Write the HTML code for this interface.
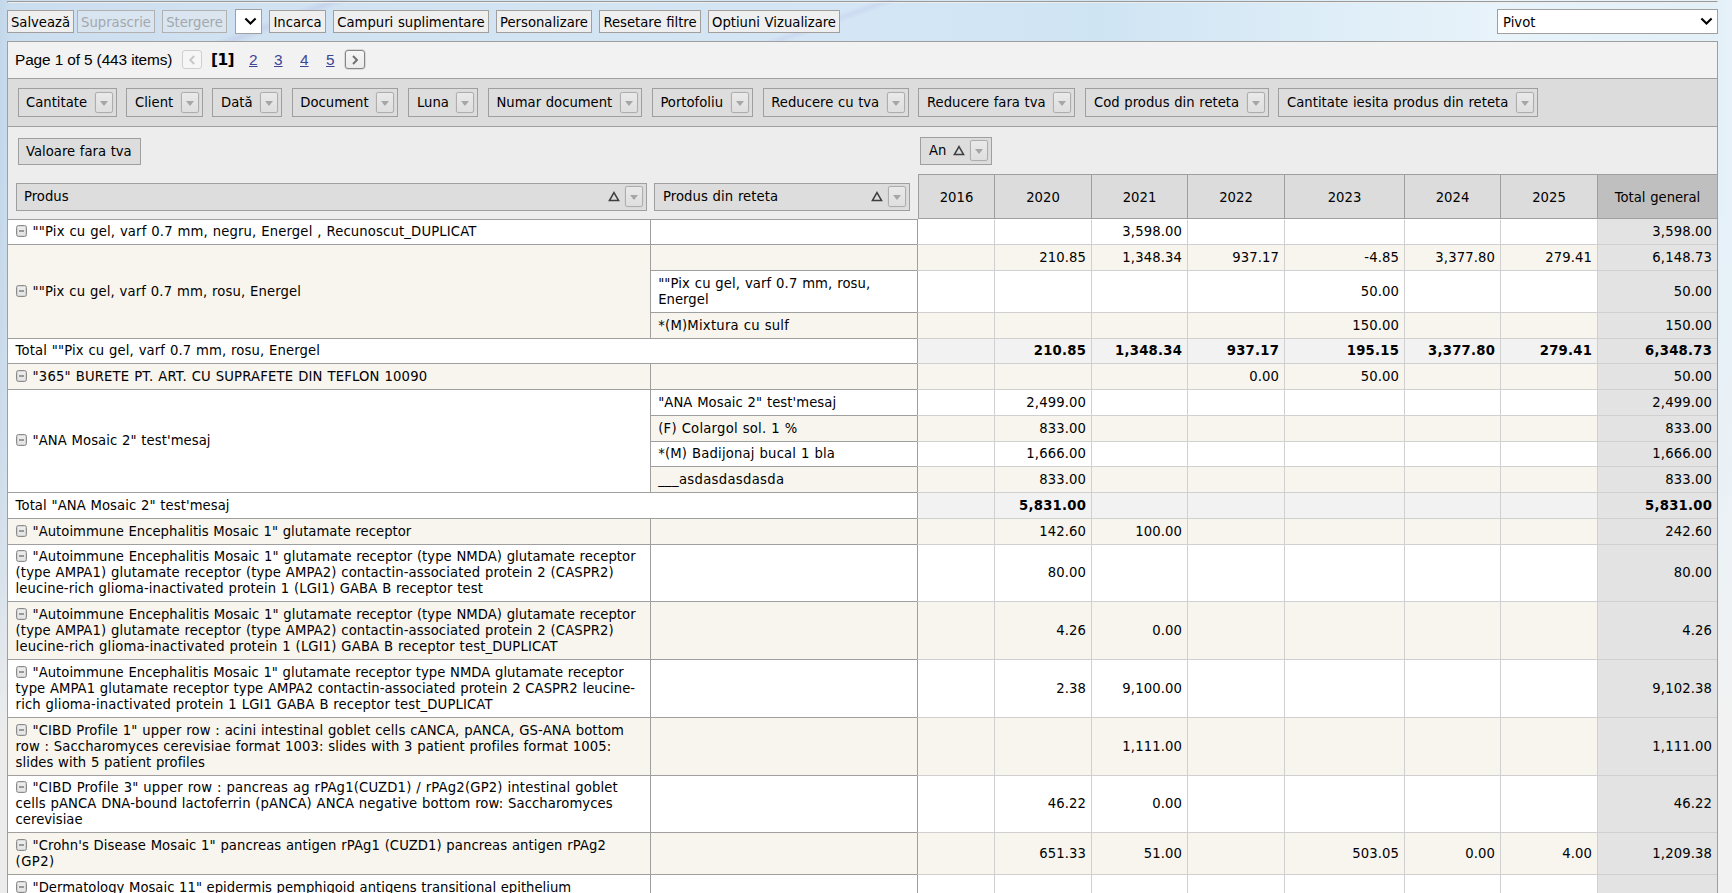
<!DOCTYPE html>
<html lang="ro"><head><meta charset="utf-8"><title>Pivot</title>
<style>
html,body{margin:0;padding:0}
body{width:1732px;height:893px;overflow:hidden;position:relative;font-family:"DejaVu Sans","Liberation Sans",sans-serif;font-size:13.2px;color:#000;word-spacing:0.45px;
background:linear-gradient(90deg,#c3d7ea 0px,#cbdeef 12px,#d0e1f1 200px,#d3e4f3 600px,#d4e6f5 850px,#cfe4f3 1100px,#dcecf7 1300px,#e8f3fa 1500px,#e3f0f8 1700px,#e6f1f9 1732px)}
.a{position:absolute;box-sizing:border-box}
.hr{left:7px;top:1px;width:1711px;height:2px;border-top:1px solid #9a9a9a;border-left:1px solid #9a9a9a;border-bottom:1px solid #eeeeee;border-right:1px solid #eee}
.btn{margin:0;padding:0;font:inherit;color:#000;word-spacing:inherit;appearance:none;-webkit-appearance:none;top:10px;height:23px;border:1px solid #a19e9b;background:#efefef;border-radius:0.5px;line-height:23px;text-align:center;white-space:nowrap}
.btn.dis{background:rgba(239,239,239,.32);color:#a3a8ad;border-color:#b3b1af}
.sel{top:9px;height:25px;border:1px solid #a0a0a0;background:#fff;border-radius:0;line-height:25px;white-space:nowrap}
.grid{left:7px;top:41px;width:1711px;height:860px;border:1px solid #9f9f9f;background:#ededed}
.pager{left:8px;top:42px;width:1709px;height:36px;background:#f2f2f2}
.fa{left:8px;top:78px;width:1709px;height:49px;background:#dcdcdc;border-top:1px solid #9f9f9f;border-bottom:1px solid #9f9f9f}
.fld{border:1px solid #9f9f9f;background:#dddddd;white-space:nowrap}
.fld .t{position:absolute;left:8px;top:0;line-height:27px}
.fb{position:absolute;width:18px;height:21px;box-sizing:border-box;border:1px solid #adadad;border-radius:2.2px;background:linear-gradient(#e9e9e9,#dfdfdf);box-shadow:0 0 0 0.6px #d6d6d6}
.fb:after{content:"";position:absolute;left:3.7px;top:7.5px;border-left:4.3px solid transparent;border-right:4.3px solid transparent;border-top:5.2px solid #a6a6a6}
.ch{top:174px;height:45px;border-top:1px solid #9f9f9f;border-left:1px solid #9f9f9f;border-bottom:1px solid #9f9f9f;background:#dcdcdc;text-align:center;line-height:46px}
.rc{border-top:1px solid #9f9f9f}
.tl{white-space:nowrap;line-height:16px;height:16px}
.dc{border-top:1px solid #d0d0d0;border-left:1px solid #d0d0d0}
.ic{width:11px;height:12px;border:1px solid #8b8b8b;border-radius:2.5px;background:linear-gradient(#ededed,#e3e3e3);box-shadow:inset 0 0 0 0.6px #c4c4c4}
.ic:after{content:"";position:absolute;left:2px;top:4.3px;width:5.4px;height:1.4px;background:#999}
.pg{font-family:"Liberation Sans","DejaVu Sans",sans-serif;font-size:15.4px;word-spacing:0;white-space:nowrap;line-height:20px}
.pb{width:20px;height:19px;border:1px solid #cfcfcf;border-radius:3px;background:#f6f6f6}
</style></head><body>

<div class="a" style="left:0;top:0;width:9px;height:893px;background:linear-gradient(180deg,rgba(236,236,236,0) 0,rgba(236,236,236,0) 120px,rgba(236,236,236,.1) 300px,rgba(236,236,236,.22) 430px,rgba(236,236,236,.36) 510px,rgba(236,236,236,.55) 590px,rgba(236,236,236,.74) 650px,rgba(236,236,236,.9) 700px,#ececec 740px,#ececec 893px)"></div>
<div class="a" style="left:1716px;top:0;width:16px;height:893px;background:linear-gradient(180deg,rgba(242,242,242,0) 0,rgba(242,242,242,0) 200px,rgba(242,242,242,.15) 330px,rgba(242,242,242,.35) 460px,rgba(242,242,242,.6) 580px,rgba(242,242,242,.85) 660px,#f2f2f2 730px,#f2f2f2 893px)"></div>
<div class="a" style="left:0;top:0;width:1732px;height:41px;overflow:hidden"><div class="a" style="left:195px;top:14px;width:180px;height:12px;transform:rotate(-21deg);background:linear-gradient(180deg,rgba(176,184,226,0),rgba(176,184,226,.32) 50%,rgba(176,184,226,0))"></div><div class="a" style="left:745px;top:15px;width:180px;height:10px;transform:rotate(-20deg);background:linear-gradient(180deg,rgba(186,186,230,0),rgba(186,186,230,.28) 50%,rgba(186,186,230,0))"></div></div>
<div class="a hr"></div>
<button type="button" class="a btn" style="left:7px;width:67px">Salvează</button>
<button type="button" class="a btn dis" disabled style="left:77px;width:78px">Suprascrie</button>
<button type="button" class="a btn dis" disabled style="left:162px;width:65px">Stergere</button>
<div class="a sel" style="left:235px;width:27px"><svg class="a" style="right:3.6px;top:7.2px" width="13" height="9" viewBox="0 0 13 9"><path d="M1.4 1.5 L6.5 6.6 L11.6 1.5" fill="none" stroke="#000" stroke-width="2.1"/></svg></div>
<button type="button" class="a btn" style="left:269px;width:57px">Incarca</button>
<button type="button" class="a btn" style="left:333px;width:156px">Campuri suplimentare</button>
<button type="button" class="a btn" style="left:496px;width:96px">Personalizare</button>
<button type="button" class="a btn" style="left:599px;width:102px">Resetare filtre</button>
<button type="button" class="a btn" style="left:708px;width:132px">Optiuni Vizualizare</button>
<div class="a sel" style="left:1497px;width:221px"><span style="padding-left:5px">Pivot</span><svg class="a" style="right:4.5px;top:7.2px" width="13" height="9" viewBox="0 0 13 9"><path d="M1.4 1.5 L6.5 6.6 L11.6 1.5" fill="none" stroke="#000" stroke-width="2.1"/></svg></div>
<div class="a grid"></div><div class="a pager"></div><div class="a fa"></div>
<div class="a pg" style="left:15px;top:50px;letter-spacing:-0.115px">Page 1 of 5 (443 items)</div>
<div class="a pb" style="left:182px;top:50px"><svg class="a" style="left:5px;top:4px" width="8" height="10" viewBox="0 0 8 10"><path d="M6.2 1 L2.2 5 L6.2 9" fill="none" stroke="#c6c6c6" stroke-width="1.9"/></svg></div>
<div class="a pg" style="left:211px;top:50px;font-weight:bold;font-family:'DejaVu Sans',sans-serif;font-size:15.4px;letter-spacing:-0.6px">[1]</div>
<a class="a pg" style="left:249px;top:50px;color:#3c4596;text-decoration:underline">2</a>
<a class="a pg" style="left:274px;top:50px;color:#3c4596;text-decoration:underline">3</a>
<a class="a pg" style="left:300px;top:50px;color:#3c4596;text-decoration:underline">4</a>
<a class="a pg" style="left:326px;top:50px;color:#3c4596;text-decoration:underline">5</a>
<div class="a pb" style="left:345px;top:50px;border-color:#858585;background:linear-gradient(#f6f6f6,#ececec);box-shadow:0 0 0 0.5px #bdbdbd"><svg class="a" style="left:5px;top:4px" width="8" height="10" viewBox="0 0 8 10"><path d="M2 1 L6 5 L2 9" fill="none" stroke="#6f6f6f" stroke-width="1.9"/></svg></div>
<div class="a fld" style="left:18px;top:88px;width:99px;height:29px"><span class="t" style="left:7.00px;line-height:27px"><span>Cantitate</span></span><span class="fb" style="right:3px;top:3px"></span></div>
<div class="a fld" style="left:126px;top:88px;width:77px;height:29px"><span class="t" style="left:8.00px;line-height:27px"><span>Client</span></span><span class="fb" style="right:3px;top:3px"></span></div>
<div class="a fld" style="left:212px;top:88px;width:70px;height:29px"><span class="t" style="left:8.00px;line-height:27px"><span>Dată</span></span><span class="fb" style="right:3px;top:3px"></span></div>
<div class="a fld" style="left:292px;top:88px;width:106px;height:29px"><span class="t" style="left:7.30px;line-height:27px"><span>Document</span></span><span class="fb" style="right:3px;top:3px"></span></div>
<div class="a fld" style="left:408px;top:88px;width:70px;height:29px"><span class="t" style="left:8.00px;line-height:27px"><span>Luna</span></span><span class="fb" style="right:3px;top:3px"></span></div>
<div class="a fld" style="left:488px;top:88px;width:154px;height:29px"><span class="t" style="left:7.50px;line-height:27px"><span>Numar document</span></span><span class="fb" style="right:3px;top:3px"></span></div>
<div class="a fld" style="left:652px;top:88px;width:101px;height:29px"><span class="t" style="left:7.40px;line-height:27px"><span>Portofoliu</span></span><span class="fb" style="right:3px;top:3px"></span></div>
<div class="a fld" style="left:763px;top:88px;width:146px;height:29px"><span class="t" style="left:7.30px;line-height:27px"><span style="letter-spacing:-0.005px">Reducere cu tva</span></span><span class="fb" style="right:3px;top:3px"></span></div>
<div class="a fld" style="left:918px;top:88px;width:157px;height:29px"><span class="t" style="left:8.00px;line-height:27px"><span>Reducere fara tva</span></span><span class="fb" style="right:3px;top:3px"></span></div>
<div class="a fld" style="left:1085px;top:88px;width:184px;height:29px"><span class="t" style="left:8.00px;line-height:27px"><span style="letter-spacing:0.008px">Cod produs din reteta</span></span><span class="fb" style="right:3px;top:3px"></span></div>
<div class="a fld" style="left:1278px;top:88px;width:260px;height:29px"><span class="t" style="left:8.00px;line-height:27px"><span style="letter-spacing:0.025px">Cantitate iesita produs din reteta</span></span><span class="fb" style="right:3px;top:3px"></span></div>
<div class="a fld" style="left:18px;top:138px;width:123px;height:27px"><span class="t" style="left:7.00px;line-height:25px"><span>Valoare fara tva</span></span></div>
<div class="a fld" style="left:920px;top:137px;width:72px;height:28px"><span class="t" style="left:8.00px;line-height:26px"><span>An</span></span><span class="fb" style="right:3px;top:2px"></span><svg style="position:absolute;right:26px;top:7px" width="12" height="11" viewBox="0 0 12 11"><path d="M6 1.6 L10.6 9.6 L1.4 9.6 Z" fill="none" stroke="#3f3f3f" stroke-width="1.5"/></svg></div>
<div class="a fld" style="left:16px;top:183px;width:631px;height:28px"><span class="t" style="left:7.00px;line-height:26px"><span>Produs</span></span><span class="fb" style="right:3px;top:2px"></span><svg style="position:absolute;right:26px;top:7px" width="12" height="11" viewBox="0 0 12 11"><path d="M6 1.6 L10.6 9.6 L1.4 9.6 Z" fill="none" stroke="#3f3f3f" stroke-width="1.5"/></svg></div>
<div class="a fld" style="left:654px;top:183px;width:256px;height:28px"><span class="t" style="left:8.00px;line-height:26px"><span style="letter-spacing:0.066px">Produs din reteta</span></span><span class="fb" style="right:3px;top:2px"></span><svg style="position:absolute;right:26px;top:7px" width="12" height="11" viewBox="0 0 12 11"><path d="M6 1.6 L10.6 9.6 L1.4 9.6 Z" fill="none" stroke="#3f3f3f" stroke-width="1.5"/></svg></div>
<div class="a ch" style="left:918px;width:76px;line-height:46.5px">2016</div>
<div class="a ch" style="left:994px;width:97px;line-height:46.5px">2020</div>
<div class="a ch" style="left:1091px;width:96px;line-height:46.5px">2021</div>
<div class="a ch" style="left:1187px;width:97px;line-height:46.5px">2022</div>
<div class="a ch" style="left:1284px;width:120px;line-height:46.5px">2023</div>
<div class="a ch" style="left:1404px;width:96px;line-height:46.5px">2024</div>
<div class="a ch" style="left:1500px;width:97px;line-height:46.5px">2025</div>
<div class="a ch" style="left:1597px;width:120px;line-height:46.5px;background:#bfbfbf">Total general</div>
<div class="a rc" style="left:8px;top:219px;width:642px;height:25px;background:#ffffff"></div>
<div class="a ic" style="left:16px;top:225px"></div>
<div class="a tl" style="left:32.6px;top:224px"><span style="letter-spacing:0.156px">&quot;&quot;Pix cu gel, varf 0.7 mm, negru, Energel , Recunoscut_DUPLICAT</span></div>
<div class="a rc" style="left:8px;top:244px;width:642px;height:94px;background:#f8f5ef"></div>
<div class="a ic" style="left:16px;top:285px"></div>
<div class="a tl" style="left:32.6px;top:284px"><span style="letter-spacing:0.131px">&quot;&quot;Pix cu gel, varf 0.7 mm, rosu, Energel</span></div>
<div class="a rc" style="left:8px;top:338px;width:909px;height:25px;background:#ffffff"></div>
<div class="a tl" style="left:15.6px;top:343px"><span style="letter-spacing:0.126px">Total &quot;&quot;Pix cu gel, varf 0.7 mm, rosu, Energel</span></div>
<div class="a rc" style="left:8px;top:363px;width:642px;height:26px;background:#f8f5ef"></div>
<div class="a ic" style="left:16px;top:370px"></div>
<div class="a tl" style="left:32.6px;top:369px"><span style="letter-spacing:0.185px">&quot;365&quot; BURETE PT. ART. CU SUPRAFETE DIN TEFLON 10090</span></div>
<div class="a rc" style="left:8px;top:389px;width:642px;height:103px;background:#ffffff"></div>
<div class="a ic" style="left:16px;top:434px"></div>
<div class="a tl" style="left:32.6px;top:433px"><span style="letter-spacing:0.072px">&quot;ANA Mosaic 2&quot; test&#x27;mesaj</span></div>
<div class="a rc" style="left:8px;top:492px;width:909px;height:26px;background:#ffffff"></div>
<div class="a tl" style="left:15.6px;top:498px"><span style="letter-spacing:0.076px">Total &quot;ANA Mosaic 2&quot; test&#x27;mesaj</span></div>
<div class="a rc" style="left:8px;top:518px;width:642px;height:26px;background:#f8f5ef"></div>
<div class="a ic" style="left:16px;top:525px"></div>
<div class="a tl" style="left:32.6px;top:524px"><span style="letter-spacing:0.028px">&quot;Autoimmune Encephalitis Mosaic 1&quot; glutamate receptor</span></div>
<div class="a rc" style="left:8px;top:544px;width:642px;height:57px;background:#ffffff"></div>
<div class="a ic" style="left:16px;top:550px"></div>
<div class="a tl" style="left:32.6px;top:549px"><span style="letter-spacing:0.045px">&quot;Autoimmune Encephalitis Mosaic 1&quot; glutamate receptor (type NMDA) glutamate receptor</span></div>
<div class="a tl" style="left:15.6px;top:565px"><span style="letter-spacing:0.111px">(type AMPA1) glutamate receptor (type AMPA2) contactin-associated protein 2 (CASPR2)</span></div>
<div class="a tl" style="left:15.6px;top:581px"><span style="letter-spacing:0.108px">leucine-rich glioma-inactivated protein 1 (LGI1) GABA B receptor test</span></div>
<div class="a rc" style="left:8px;top:601px;width:642px;height:58px;background:#f8f5ef"></div>
<div class="a ic" style="left:16px;top:608px"></div>
<div class="a tl" style="left:32.6px;top:607px"><span style="letter-spacing:0.045px">&quot;Autoimmune Encephalitis Mosaic 1&quot; glutamate receptor (type NMDA) glutamate receptor</span></div>
<div class="a tl" style="left:15.6px;top:623px"><span style="letter-spacing:0.111px">(type AMPA1) glutamate receptor (type AMPA2) contactin-associated protein 2 (CASPR2)</span></div>
<div class="a tl" style="left:15.6px;top:639px"><span style="letter-spacing:0.143px">leucine-rich glioma-inactivated protein 1 (LGI1) GABA B receptor test_DUPLICAT</span></div>
<div class="a rc" style="left:8px;top:659px;width:642px;height:58px;background:#ffffff"></div>
<div class="a ic" style="left:16px;top:666px"></div>
<div class="a tl" style="left:32.6px;top:665px"><span style="letter-spacing:0.025px">&quot;Autoimmune Encephalitis Mosaic 1&quot; glutamate receptor type NMDA glutamate receptor</span></div>
<div class="a tl" style="left:15.6px;top:681px"><span style="letter-spacing:0.052px">type AMPA1 glutamate receptor type AMPA2 contactin-associated protein 2 CASPR2 leucine-</span></div>
<div class="a tl" style="left:15.6px;top:697px"><span style="letter-spacing:0.128px">rich glioma-inactivated protein 1 LGI1 GABA B receptor test_DUPLICAT</span></div>
<div class="a rc" style="left:8px;top:717px;width:642px;height:58px;background:#f8f5ef"></div>
<div class="a ic" style="left:16px;top:724px"></div>
<div class="a tl" style="left:32.6px;top:723px"><span style="letter-spacing:0.115px">&quot;CIBD Profile 1&quot; upper row : acini intestinal goblet cells cANCA, pANCA, GS-ANA bottom</span></div>
<div class="a tl" style="left:15.6px;top:739px"><span style="letter-spacing:0.091px">row : Saccharomyces cerevisiae format 1003: slides with 3 patient profiles format 1005:</span></div>
<div class="a tl" style="left:15.6px;top:755px"><span style="letter-spacing:0.043px">slides with 5 patient profiles</span></div>
<div class="a rc" style="left:8px;top:775px;width:642px;height:57px;background:#ffffff"></div>
<div class="a ic" style="left:16px;top:781px"></div>
<div class="a tl" style="left:32.6px;top:780px"><span style="letter-spacing:0.176px">&quot;CIBD Profile 3&quot; upper row : pancreas ag rPAg1(CUZD1) / rPAg2(GP2) intestinal goblet</span></div>
<div class="a tl" style="left:15.6px;top:796px"><span style="letter-spacing:0.102px">cells pANCA DNA-bound lactoferrin (pANCA) ANCA negative bottom row: Saccharomyces</span></div>
<div class="a tl" style="left:15.6px;top:812px"><span style="letter-spacing:0.019px">cerevisiae</span></div>
<div class="a rc" style="left:8px;top:832px;width:642px;height:42px;background:#f8f5ef"></div>
<div class="a ic" style="left:16px;top:839px"></div>
<div class="a tl" style="left:32.6px;top:838px"><span style="letter-spacing:0.071px">&quot;Crohn&#x27;s Disease Mosaic 1&quot; pancreas antigen rPAg1 (CUZD1) pancreas antigen rPAg2</span></div>
<div class="a tl" style="left:15.6px;top:854px"><span style="letter-spacing:0.429px">(GP2)</span></div>
<div class="a rc" style="left:8px;top:874px;width:642px;height:42px;background:#ffffff"></div>
<div class="a ic" style="left:16px;top:881px"></div>
<div class="a tl" style="left:32.6px;top:880px"><span style="letter-spacing:0.014px">&quot;Dermatology Mosaic 11&quot; epidermis pemphigoid antigens transitional epithelium</span></div>
<div class="a rc" style="left:650px;top:219px;width:267px;height:25px;background:#ffffff;border-left:1px solid #9f9f9f"></div>
<div class="a rc" style="left:650px;top:244px;width:267px;height:26px;background:#f8f5ef;border-left:1px solid #9f9f9f"></div>
<div class="a rc" style="left:650px;top:270px;width:267px;height:42px;background:#ffffff;border-left:1px solid #9f9f9f"></div>
<div class="a tl" style="left:658.2px;top:276px"><span style="letter-spacing:0.114px">&quot;&quot;Pix cu gel, varf 0.7 mm, rosu,</span></div>
<div class="a tl" style="left:658.2px;top:292px"><span style="letter-spacing:0.037px">Energel</span></div>
<div class="a rc" style="left:650px;top:312px;width:267px;height:26px;background:#f8f5ef;border-left:1px solid #9f9f9f"></div>
<div class="a tl" style="left:658.2px;top:318px"><span style="letter-spacing:0.228px">*(M)Mixtura cu sulf</span></div>
<div class="a rc" style="left:650px;top:363px;width:267px;height:26px;background:#f8f5ef;border-left:1px solid #9f9f9f"></div>
<div class="a rc" style="left:650px;top:389px;width:267px;height:26px;background:#ffffff;border-left:1px solid #9f9f9f"></div>
<div class="a tl" style="left:658.2px;top:395px"><span style="letter-spacing:0.072px">&quot;ANA Mosaic 2&quot; test&#x27;mesaj</span></div>
<div class="a rc" style="left:650px;top:415px;width:267px;height:26px;background:#f8f5ef;border-left:1px solid #9f9f9f"></div>
<div class="a tl" style="left:658.2px;top:421px"><span style="letter-spacing:0.235px">(F) Colargol sol. 1 %</span></div>
<div class="a rc" style="left:650px;top:441px;width:267px;height:25px;background:#ffffff;border-left:1px solid #9f9f9f"></div>
<div class="a tl" style="left:658.2px;top:446px"><span style="letter-spacing:0.187px">*(M) Badijonaj bucal 1 bla</span></div>
<div class="a rc" style="left:650px;top:466px;width:267px;height:26px;background:#f8f5ef;border-left:1px solid #9f9f9f"></div>
<div class="a tl" style="left:658.2px;top:472px"><span style="letter-spacing:0.313px">___asdasdasdasda</span></div>
<div class="a rc" style="left:650px;top:518px;width:267px;height:26px;background:#f8f5ef;border-left:1px solid #9f9f9f"></div>
<div class="a rc" style="left:650px;top:544px;width:267px;height:57px;background:#ffffff;border-left:1px solid #9f9f9f"></div>
<div class="a rc" style="left:650px;top:601px;width:267px;height:58px;background:#f8f5ef;border-left:1px solid #9f9f9f"></div>
<div class="a rc" style="left:650px;top:659px;width:267px;height:58px;background:#ffffff;border-left:1px solid #9f9f9f"></div>
<div class="a rc" style="left:650px;top:717px;width:267px;height:58px;background:#f8f5ef;border-left:1px solid #9f9f9f"></div>
<div class="a rc" style="left:650px;top:775px;width:267px;height:57px;background:#ffffff;border-left:1px solid #9f9f9f"></div>
<div class="a rc" style="left:650px;top:832px;width:267px;height:42px;background:#f8f5ef;border-left:1px solid #9f9f9f"></div>
<div class="a rc" style="left:650px;top:874px;width:267px;height:42px;background:#ffffff;border-left:1px solid #9f9f9f"></div>
<div class="a dc" style="left:917px;top:219px;width:77px;height:25px;background:#ffffff;border-left-color:#9f9f9f;border-top-color:#ffffff"></div>
<div class="a dc" style="left:994px;top:219px;width:97px;height:25px;background:#ffffff;border-top-color:#ffffff"></div>
<div class="a dc" style="left:1091px;top:219px;width:96px;height:25px;background:#ffffff;border-top-color:#ffffff"></div>
<div class="a tl" style="left:1091px;top:224px;width:91.14px;text-align:right;letter-spacing:0.14px"><span>3,598.00</span></div>
<div class="a dc" style="left:1187px;top:219px;width:97px;height:25px;background:#ffffff;border-top-color:#ffffff"></div>
<div class="a dc" style="left:1284px;top:219px;width:120px;height:25px;background:#ffffff;border-top-color:#ffffff"></div>
<div class="a dc" style="left:1404px;top:219px;width:96px;height:25px;background:#ffffff;border-top-color:#ffffff"></div>
<div class="a dc" style="left:1500px;top:219px;width:97px;height:25px;background:#ffffff;border-top-color:#ffffff"></div>
<div class="a dc" style="left:1597px;top:219px;width:120px;height:25px;background:#e3e3e3;border-top-color:#e3e3e3"></div>
<div class="a tl" style="left:1597px;top:224px;width:115.14px;text-align:right;letter-spacing:0.14px"><span>3,598.00</span></div>
<div class="a dc" style="left:917px;top:244px;width:77px;height:26px;background:#f8f5ef;border-left-color:#9f9f9f"></div>
<div class="a dc" style="left:994px;top:244px;width:97px;height:26px;background:#f8f5ef"></div>
<div class="a tl" style="left:994px;top:250px;width:92.14px;text-align:right;letter-spacing:0.14px"><span>210.85</span></div>
<div class="a dc" style="left:1091px;top:244px;width:96px;height:26px;background:#f8f5ef"></div>
<div class="a tl" style="left:1091px;top:250px;width:91.14px;text-align:right;letter-spacing:0.14px"><span>1,348.34</span></div>
<div class="a dc" style="left:1187px;top:244px;width:97px;height:26px;background:#f8f5ef"></div>
<div class="a tl" style="left:1187px;top:250px;width:92.14px;text-align:right;letter-spacing:0.14px"><span>937.17</span></div>
<div class="a dc" style="left:1284px;top:244px;width:120px;height:26px;background:#f8f5ef"></div>
<div class="a tl" style="left:1284px;top:250px;width:115.14px;text-align:right;letter-spacing:0.14px"><span>-4.85</span></div>
<div class="a dc" style="left:1404px;top:244px;width:96px;height:26px;background:#f8f5ef"></div>
<div class="a tl" style="left:1404px;top:250px;width:91.14px;text-align:right;letter-spacing:0.14px"><span>3,377.80</span></div>
<div class="a dc" style="left:1500px;top:244px;width:97px;height:26px;background:#f8f5ef"></div>
<div class="a tl" style="left:1500px;top:250px;width:92.14px;text-align:right;letter-spacing:0.14px"><span>279.41</span></div>
<div class="a dc" style="left:1597px;top:244px;width:120px;height:26px;background:#e3e3e3"></div>
<div class="a tl" style="left:1597px;top:250px;width:115.14px;text-align:right;letter-spacing:0.14px"><span>6,148.73</span></div>
<div class="a dc" style="left:917px;top:270px;width:77px;height:42px;background:#ffffff;border-left-color:#9f9f9f"></div>
<div class="a dc" style="left:994px;top:270px;width:97px;height:42px;background:#ffffff"></div>
<div class="a dc" style="left:1091px;top:270px;width:96px;height:42px;background:#ffffff"></div>
<div class="a dc" style="left:1187px;top:270px;width:97px;height:42px;background:#ffffff"></div>
<div class="a dc" style="left:1284px;top:270px;width:120px;height:42px;background:#ffffff"></div>
<div class="a tl" style="left:1284px;top:284px;width:115.14px;text-align:right;letter-spacing:0.14px"><span>50.00</span></div>
<div class="a dc" style="left:1404px;top:270px;width:96px;height:42px;background:#ffffff"></div>
<div class="a dc" style="left:1500px;top:270px;width:97px;height:42px;background:#ffffff"></div>
<div class="a dc" style="left:1597px;top:270px;width:120px;height:42px;background:#e3e3e3"></div>
<div class="a tl" style="left:1597px;top:284px;width:115.14px;text-align:right;letter-spacing:0.14px"><span>50.00</span></div>
<div class="a dc" style="left:917px;top:312px;width:77px;height:26px;background:#f8f5ef;border-left-color:#9f9f9f"></div>
<div class="a dc" style="left:994px;top:312px;width:97px;height:26px;background:#f8f5ef"></div>
<div class="a dc" style="left:1091px;top:312px;width:96px;height:26px;background:#f8f5ef"></div>
<div class="a dc" style="left:1187px;top:312px;width:97px;height:26px;background:#f8f5ef"></div>
<div class="a dc" style="left:1284px;top:312px;width:120px;height:26px;background:#f8f5ef"></div>
<div class="a tl" style="left:1284px;top:318px;width:115.14px;text-align:right;letter-spacing:0.14px"><span>150.00</span></div>
<div class="a dc" style="left:1404px;top:312px;width:96px;height:26px;background:#f8f5ef"></div>
<div class="a dc" style="left:1500px;top:312px;width:97px;height:26px;background:#f8f5ef"></div>
<div class="a dc" style="left:1597px;top:312px;width:120px;height:26px;background:#e3e3e3"></div>
<div class="a tl" style="left:1597px;top:318px;width:115.14px;text-align:right;letter-spacing:0.14px"><span>150.00</span></div>
<div class="a dc" style="left:917px;top:338px;width:77px;height:25px;background:#f2f2f2;border-left-color:#9f9f9f"></div>
<div class="a dc" style="left:994px;top:338px;width:97px;height:25px;background:#f2f2f2"></div>
<div class="a tl" style="left:994px;top:343px;width:92.28px;text-align:right;font-weight:bold;letter-spacing:0.28px"><span>210.85</span></div>
<div class="a dc" style="left:1091px;top:338px;width:96px;height:25px;background:#f2f2f2"></div>
<div class="a tl" style="left:1091px;top:343px;width:91.28px;text-align:right;font-weight:bold;letter-spacing:0.28px"><span>1,348.34</span></div>
<div class="a dc" style="left:1187px;top:338px;width:97px;height:25px;background:#f2f2f2"></div>
<div class="a tl" style="left:1187px;top:343px;width:92.28px;text-align:right;font-weight:bold;letter-spacing:0.28px"><span>937.17</span></div>
<div class="a dc" style="left:1284px;top:338px;width:120px;height:25px;background:#f2f2f2"></div>
<div class="a tl" style="left:1284px;top:343px;width:115.28px;text-align:right;font-weight:bold;letter-spacing:0.28px"><span>195.15</span></div>
<div class="a dc" style="left:1404px;top:338px;width:96px;height:25px;background:#f2f2f2"></div>
<div class="a tl" style="left:1404px;top:343px;width:91.28px;text-align:right;font-weight:bold;letter-spacing:0.28px"><span>3,377.80</span></div>
<div class="a dc" style="left:1500px;top:338px;width:97px;height:25px;background:#f2f2f2"></div>
<div class="a tl" style="left:1500px;top:343px;width:92.28px;text-align:right;font-weight:bold;letter-spacing:0.28px"><span>279.41</span></div>
<div class="a dc" style="left:1597px;top:338px;width:120px;height:25px;background:#e3e3e3"></div>
<div class="a tl" style="left:1597px;top:343px;width:115.28px;text-align:right;font-weight:bold;letter-spacing:0.28px"><span>6,348.73</span></div>
<div class="a dc" style="left:917px;top:363px;width:77px;height:26px;background:#f8f5ef;border-left-color:#9f9f9f"></div>
<div class="a dc" style="left:994px;top:363px;width:97px;height:26px;background:#f8f5ef"></div>
<div class="a dc" style="left:1091px;top:363px;width:96px;height:26px;background:#f8f5ef"></div>
<div class="a dc" style="left:1187px;top:363px;width:97px;height:26px;background:#f8f5ef"></div>
<div class="a tl" style="left:1187px;top:369px;width:92.14px;text-align:right;letter-spacing:0.14px"><span>0.00</span></div>
<div class="a dc" style="left:1284px;top:363px;width:120px;height:26px;background:#f8f5ef"></div>
<div class="a tl" style="left:1284px;top:369px;width:115.14px;text-align:right;letter-spacing:0.14px"><span>50.00</span></div>
<div class="a dc" style="left:1404px;top:363px;width:96px;height:26px;background:#f8f5ef"></div>
<div class="a dc" style="left:1500px;top:363px;width:97px;height:26px;background:#f8f5ef"></div>
<div class="a dc" style="left:1597px;top:363px;width:120px;height:26px;background:#e3e3e3"></div>
<div class="a tl" style="left:1597px;top:369px;width:115.14px;text-align:right;letter-spacing:0.14px"><span>50.00</span></div>
<div class="a dc" style="left:917px;top:389px;width:77px;height:26px;background:#ffffff;border-left-color:#9f9f9f"></div>
<div class="a dc" style="left:994px;top:389px;width:97px;height:26px;background:#ffffff"></div>
<div class="a tl" style="left:994px;top:395px;width:92.14px;text-align:right;letter-spacing:0.14px"><span>2,499.00</span></div>
<div class="a dc" style="left:1091px;top:389px;width:96px;height:26px;background:#ffffff"></div>
<div class="a dc" style="left:1187px;top:389px;width:97px;height:26px;background:#ffffff"></div>
<div class="a dc" style="left:1284px;top:389px;width:120px;height:26px;background:#ffffff"></div>
<div class="a dc" style="left:1404px;top:389px;width:96px;height:26px;background:#ffffff"></div>
<div class="a dc" style="left:1500px;top:389px;width:97px;height:26px;background:#ffffff"></div>
<div class="a dc" style="left:1597px;top:389px;width:120px;height:26px;background:#e3e3e3"></div>
<div class="a tl" style="left:1597px;top:395px;width:115.14px;text-align:right;letter-spacing:0.14px"><span>2,499.00</span></div>
<div class="a dc" style="left:917px;top:415px;width:77px;height:26px;background:#f8f5ef;border-left-color:#9f9f9f"></div>
<div class="a dc" style="left:994px;top:415px;width:97px;height:26px;background:#f8f5ef"></div>
<div class="a tl" style="left:994px;top:421px;width:92.14px;text-align:right;letter-spacing:0.14px"><span>833.00</span></div>
<div class="a dc" style="left:1091px;top:415px;width:96px;height:26px;background:#f8f5ef"></div>
<div class="a dc" style="left:1187px;top:415px;width:97px;height:26px;background:#f8f5ef"></div>
<div class="a dc" style="left:1284px;top:415px;width:120px;height:26px;background:#f8f5ef"></div>
<div class="a dc" style="left:1404px;top:415px;width:96px;height:26px;background:#f8f5ef"></div>
<div class="a dc" style="left:1500px;top:415px;width:97px;height:26px;background:#f8f5ef"></div>
<div class="a dc" style="left:1597px;top:415px;width:120px;height:26px;background:#e3e3e3"></div>
<div class="a tl" style="left:1597px;top:421px;width:115.14px;text-align:right;letter-spacing:0.14px"><span>833.00</span></div>
<div class="a dc" style="left:917px;top:441px;width:77px;height:25px;background:#ffffff;border-left-color:#9f9f9f"></div>
<div class="a dc" style="left:994px;top:441px;width:97px;height:25px;background:#ffffff"></div>
<div class="a tl" style="left:994px;top:446px;width:92.14px;text-align:right;letter-spacing:0.14px"><span>1,666.00</span></div>
<div class="a dc" style="left:1091px;top:441px;width:96px;height:25px;background:#ffffff"></div>
<div class="a dc" style="left:1187px;top:441px;width:97px;height:25px;background:#ffffff"></div>
<div class="a dc" style="left:1284px;top:441px;width:120px;height:25px;background:#ffffff"></div>
<div class="a dc" style="left:1404px;top:441px;width:96px;height:25px;background:#ffffff"></div>
<div class="a dc" style="left:1500px;top:441px;width:97px;height:25px;background:#ffffff"></div>
<div class="a dc" style="left:1597px;top:441px;width:120px;height:25px;background:#e3e3e3"></div>
<div class="a tl" style="left:1597px;top:446px;width:115.14px;text-align:right;letter-spacing:0.14px"><span>1,666.00</span></div>
<div class="a dc" style="left:917px;top:466px;width:77px;height:26px;background:#f8f5ef;border-left-color:#9f9f9f"></div>
<div class="a dc" style="left:994px;top:466px;width:97px;height:26px;background:#f8f5ef"></div>
<div class="a tl" style="left:994px;top:472px;width:92.14px;text-align:right;letter-spacing:0.14px"><span>833.00</span></div>
<div class="a dc" style="left:1091px;top:466px;width:96px;height:26px;background:#f8f5ef"></div>
<div class="a dc" style="left:1187px;top:466px;width:97px;height:26px;background:#f8f5ef"></div>
<div class="a dc" style="left:1284px;top:466px;width:120px;height:26px;background:#f8f5ef"></div>
<div class="a dc" style="left:1404px;top:466px;width:96px;height:26px;background:#f8f5ef"></div>
<div class="a dc" style="left:1500px;top:466px;width:97px;height:26px;background:#f8f5ef"></div>
<div class="a dc" style="left:1597px;top:466px;width:120px;height:26px;background:#e3e3e3"></div>
<div class="a tl" style="left:1597px;top:472px;width:115.14px;text-align:right;letter-spacing:0.14px"><span>833.00</span></div>
<div class="a dc" style="left:917px;top:492px;width:77px;height:26px;background:#f2f2f2;border-left-color:#9f9f9f"></div>
<div class="a dc" style="left:994px;top:492px;width:97px;height:26px;background:#f2f2f2"></div>
<div class="a tl" style="left:994px;top:498px;width:92.28px;text-align:right;font-weight:bold;letter-spacing:0.28px"><span>5,831.00</span></div>
<div class="a dc" style="left:1091px;top:492px;width:96px;height:26px;background:#f2f2f2"></div>
<div class="a dc" style="left:1187px;top:492px;width:97px;height:26px;background:#f2f2f2"></div>
<div class="a dc" style="left:1284px;top:492px;width:120px;height:26px;background:#f2f2f2"></div>
<div class="a dc" style="left:1404px;top:492px;width:96px;height:26px;background:#f2f2f2"></div>
<div class="a dc" style="left:1500px;top:492px;width:97px;height:26px;background:#f2f2f2"></div>
<div class="a dc" style="left:1597px;top:492px;width:120px;height:26px;background:#e3e3e3"></div>
<div class="a tl" style="left:1597px;top:498px;width:115.28px;text-align:right;font-weight:bold;letter-spacing:0.28px"><span>5,831.00</span></div>
<div class="a dc" style="left:917px;top:518px;width:77px;height:26px;background:#f8f5ef;border-left-color:#9f9f9f"></div>
<div class="a dc" style="left:994px;top:518px;width:97px;height:26px;background:#f8f5ef"></div>
<div class="a tl" style="left:994px;top:524px;width:92.14px;text-align:right;letter-spacing:0.14px"><span>142.60</span></div>
<div class="a dc" style="left:1091px;top:518px;width:96px;height:26px;background:#f8f5ef"></div>
<div class="a tl" style="left:1091px;top:524px;width:91.14px;text-align:right;letter-spacing:0.14px"><span>100.00</span></div>
<div class="a dc" style="left:1187px;top:518px;width:97px;height:26px;background:#f8f5ef"></div>
<div class="a dc" style="left:1284px;top:518px;width:120px;height:26px;background:#f8f5ef"></div>
<div class="a dc" style="left:1404px;top:518px;width:96px;height:26px;background:#f8f5ef"></div>
<div class="a dc" style="left:1500px;top:518px;width:97px;height:26px;background:#f8f5ef"></div>
<div class="a dc" style="left:1597px;top:518px;width:120px;height:26px;background:#e3e3e3"></div>
<div class="a tl" style="left:1597px;top:524px;width:115.14px;text-align:right;letter-spacing:0.14px"><span>242.60</span></div>
<div class="a dc" style="left:917px;top:544px;width:77px;height:57px;background:#ffffff;border-left-color:#9f9f9f"></div>
<div class="a dc" style="left:994px;top:544px;width:97px;height:57px;background:#ffffff"></div>
<div class="a tl" style="left:994px;top:565px;width:92.14px;text-align:right;letter-spacing:0.14px"><span>80.00</span></div>
<div class="a dc" style="left:1091px;top:544px;width:96px;height:57px;background:#ffffff"></div>
<div class="a dc" style="left:1187px;top:544px;width:97px;height:57px;background:#ffffff"></div>
<div class="a dc" style="left:1284px;top:544px;width:120px;height:57px;background:#ffffff"></div>
<div class="a dc" style="left:1404px;top:544px;width:96px;height:57px;background:#ffffff"></div>
<div class="a dc" style="left:1500px;top:544px;width:97px;height:57px;background:#ffffff"></div>
<div class="a dc" style="left:1597px;top:544px;width:120px;height:57px;background:#e3e3e3"></div>
<div class="a tl" style="left:1597px;top:565px;width:115.14px;text-align:right;letter-spacing:0.14px"><span>80.00</span></div>
<div class="a dc" style="left:917px;top:601px;width:77px;height:58px;background:#f8f5ef;border-left-color:#9f9f9f"></div>
<div class="a dc" style="left:994px;top:601px;width:97px;height:58px;background:#f8f5ef"></div>
<div class="a tl" style="left:994px;top:623px;width:92.14px;text-align:right;letter-spacing:0.14px"><span>4.26</span></div>
<div class="a dc" style="left:1091px;top:601px;width:96px;height:58px;background:#f8f5ef"></div>
<div class="a tl" style="left:1091px;top:623px;width:91.14px;text-align:right;letter-spacing:0.14px"><span>0.00</span></div>
<div class="a dc" style="left:1187px;top:601px;width:97px;height:58px;background:#f8f5ef"></div>
<div class="a dc" style="left:1284px;top:601px;width:120px;height:58px;background:#f8f5ef"></div>
<div class="a dc" style="left:1404px;top:601px;width:96px;height:58px;background:#f8f5ef"></div>
<div class="a dc" style="left:1500px;top:601px;width:97px;height:58px;background:#f8f5ef"></div>
<div class="a dc" style="left:1597px;top:601px;width:120px;height:58px;background:#e3e3e3"></div>
<div class="a tl" style="left:1597px;top:623px;width:115.14px;text-align:right;letter-spacing:0.14px"><span>4.26</span></div>
<div class="a dc" style="left:917px;top:659px;width:77px;height:58px;background:#ffffff;border-left-color:#9f9f9f"></div>
<div class="a dc" style="left:994px;top:659px;width:97px;height:58px;background:#ffffff"></div>
<div class="a tl" style="left:994px;top:681px;width:92.14px;text-align:right;letter-spacing:0.14px"><span>2.38</span></div>
<div class="a dc" style="left:1091px;top:659px;width:96px;height:58px;background:#ffffff"></div>
<div class="a tl" style="left:1091px;top:681px;width:91.14px;text-align:right;letter-spacing:0.14px"><span>9,100.00</span></div>
<div class="a dc" style="left:1187px;top:659px;width:97px;height:58px;background:#ffffff"></div>
<div class="a dc" style="left:1284px;top:659px;width:120px;height:58px;background:#ffffff"></div>
<div class="a dc" style="left:1404px;top:659px;width:96px;height:58px;background:#ffffff"></div>
<div class="a dc" style="left:1500px;top:659px;width:97px;height:58px;background:#ffffff"></div>
<div class="a dc" style="left:1597px;top:659px;width:120px;height:58px;background:#e3e3e3"></div>
<div class="a tl" style="left:1597px;top:681px;width:115.14px;text-align:right;letter-spacing:0.14px"><span>9,102.38</span></div>
<div class="a dc" style="left:917px;top:717px;width:77px;height:58px;background:#f8f5ef;border-left-color:#9f9f9f"></div>
<div class="a dc" style="left:994px;top:717px;width:97px;height:58px;background:#f8f5ef"></div>
<div class="a dc" style="left:1091px;top:717px;width:96px;height:58px;background:#f8f5ef"></div>
<div class="a tl" style="left:1091px;top:739px;width:91.14px;text-align:right;letter-spacing:0.14px"><span>1,111.00</span></div>
<div class="a dc" style="left:1187px;top:717px;width:97px;height:58px;background:#f8f5ef"></div>
<div class="a dc" style="left:1284px;top:717px;width:120px;height:58px;background:#f8f5ef"></div>
<div class="a dc" style="left:1404px;top:717px;width:96px;height:58px;background:#f8f5ef"></div>
<div class="a dc" style="left:1500px;top:717px;width:97px;height:58px;background:#f8f5ef"></div>
<div class="a dc" style="left:1597px;top:717px;width:120px;height:58px;background:#e3e3e3"></div>
<div class="a tl" style="left:1597px;top:739px;width:115.14px;text-align:right;letter-spacing:0.14px"><span>1,111.00</span></div>
<div class="a dc" style="left:917px;top:775px;width:77px;height:57px;background:#ffffff;border-left-color:#9f9f9f"></div>
<div class="a dc" style="left:994px;top:775px;width:97px;height:57px;background:#ffffff"></div>
<div class="a tl" style="left:994px;top:796px;width:92.14px;text-align:right;letter-spacing:0.14px"><span>46.22</span></div>
<div class="a dc" style="left:1091px;top:775px;width:96px;height:57px;background:#ffffff"></div>
<div class="a tl" style="left:1091px;top:796px;width:91.14px;text-align:right;letter-spacing:0.14px"><span>0.00</span></div>
<div class="a dc" style="left:1187px;top:775px;width:97px;height:57px;background:#ffffff"></div>
<div class="a dc" style="left:1284px;top:775px;width:120px;height:57px;background:#ffffff"></div>
<div class="a dc" style="left:1404px;top:775px;width:96px;height:57px;background:#ffffff"></div>
<div class="a dc" style="left:1500px;top:775px;width:97px;height:57px;background:#ffffff"></div>
<div class="a dc" style="left:1597px;top:775px;width:120px;height:57px;background:#e3e3e3"></div>
<div class="a tl" style="left:1597px;top:796px;width:115.14px;text-align:right;letter-spacing:0.14px"><span>46.22</span></div>
<div class="a dc" style="left:917px;top:832px;width:77px;height:42px;background:#f8f5ef;border-left-color:#9f9f9f"></div>
<div class="a dc" style="left:994px;top:832px;width:97px;height:42px;background:#f8f5ef"></div>
<div class="a tl" style="left:994px;top:846px;width:92.14px;text-align:right;letter-spacing:0.14px"><span>651.33</span></div>
<div class="a dc" style="left:1091px;top:832px;width:96px;height:42px;background:#f8f5ef"></div>
<div class="a tl" style="left:1091px;top:846px;width:91.14px;text-align:right;letter-spacing:0.14px"><span>51.00</span></div>
<div class="a dc" style="left:1187px;top:832px;width:97px;height:42px;background:#f8f5ef"></div>
<div class="a dc" style="left:1284px;top:832px;width:120px;height:42px;background:#f8f5ef"></div>
<div class="a tl" style="left:1284px;top:846px;width:115.14px;text-align:right;letter-spacing:0.14px"><span>503.05</span></div>
<div class="a dc" style="left:1404px;top:832px;width:96px;height:42px;background:#f8f5ef"></div>
<div class="a tl" style="left:1404px;top:846px;width:91.14px;text-align:right;letter-spacing:0.14px"><span>0.00</span></div>
<div class="a dc" style="left:1500px;top:832px;width:97px;height:42px;background:#f8f5ef"></div>
<div class="a tl" style="left:1500px;top:846px;width:92.14px;text-align:right;letter-spacing:0.14px"><span>4.00</span></div>
<div class="a dc" style="left:1597px;top:832px;width:120px;height:42px;background:#e3e3e3"></div>
<div class="a tl" style="left:1597px;top:846px;width:115.14px;text-align:right;letter-spacing:0.14px"><span>1,209.38</span></div>
<div class="a dc" style="left:917px;top:874px;width:77px;height:42px;background:#ffffff;border-left-color:#9f9f9f"></div>
<div class="a dc" style="left:994px;top:874px;width:97px;height:42px;background:#ffffff"></div>
<div class="a dc" style="left:1091px;top:874px;width:96px;height:42px;background:#ffffff"></div>
<div class="a dc" style="left:1187px;top:874px;width:97px;height:42px;background:#ffffff"></div>
<div class="a dc" style="left:1284px;top:874px;width:120px;height:42px;background:#ffffff"></div>
<div class="a dc" style="left:1404px;top:874px;width:96px;height:42px;background:#ffffff"></div>
<div class="a dc" style="left:1500px;top:874px;width:97px;height:42px;background:#ffffff"></div>
<div class="a dc" style="left:1597px;top:874px;width:120px;height:42px;background:#e3e3e3"></div>
<div class="a" style="left:8px;top:219px;width:910px;height:1px;background:#9f9f9f"></div>
<div class="a" style="left:1717px;top:41px;width:1px;height:860px;background:#9f9f9f"></div>
</body></html>
